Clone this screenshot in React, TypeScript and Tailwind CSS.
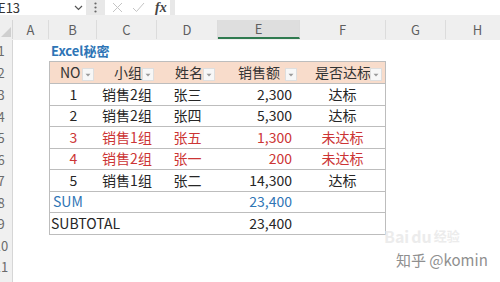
import React from 'react';

type Col = 'A' | 'B' | 'C' | 'D' | 'E' | 'F' | 'G' | 'H';

const colW: Record<Col, string> = {
    A: 'w-[36px]',
    B: 'w-[48px]',
    C: 'w-[60px]',
    D: 'w-[61px]',
    E: 'w-[82px]',
    F: 'w-[86px]',
    G: 'w-[60px]',
    H: 'w-[64px]',
};

const letters: Col[] = ['A', 'B', 'C', 'D', 'E', 'F', 'G', 'H'];

const rows = [
    { no: '1', group: '销售2组', name: '张三', amt: '2,300', ok: '达标', red: false },
    { no: '2', group: '销售2组', name: '张四', amt: '5,300', ok: '达标', red: false },
    { no: '3', group: '销售1组', name: '张五', amt: '1,300', ok: '未达标', red: true },
    { no: '4', group: '销售2组', name: '张一', amt: '200', ok: '未达标', red: true },
    { no: '5', group: '销售1组', name: '张二', amt: '14,300', ok: '达标', red: false },
];

const headers: { label: string; col: Col; pad: string }[] = [
    { label: 'NO', col: 'B', pad: 'pl-[10px]' },
    { label: '小组', col: 'C', pad: 'pl-[17px]' },
    { label: '姓名', col: 'D', pad: 'pl-[18px]' },
    { label: '销售额', col: 'E', pad: 'pl-[20px]' },
    { label: '是否达标', col: 'F', pad: 'pl-[15px]' },
];

const RowHead = ({ n }: { n: number }) => (
    <div className="flex w-[13px] shrink-0 items-center justify-end overflow-hidden border-r border-[#d6d6d6] bg-[#f0f0f0]">
        <div className="w-[22px] shrink-0 text-center text-[13px] text-[#6b6b6b]">{n}</div>
    </div>
);

const Dropdown = () => (
    <div className="absolute right-[3px] top-[6px] flex h-[13px] w-[12px] items-center justify-center border border-[#dedede] bg-[#f7f7f7]">
        <svg width="6" height="4" viewBox="0 0 6 4">
            <path d="M0.5 0.8 L5.5 0.8 L3 3.4 Z" fill="#9a9a9a" />
        </svg>
    </div>
);

const cellBase = 'flex shrink-0 items-center border-b border-[#bdbdbd] text-[14px]';

export default function App() {
    return (
        <div className="relative h-[282px] w-[500px] overflow-hidden bg-white font-['Noto_Sans_CJK_SC','Noto_Sans',sans-serif] text-[#262626]">
            {/* formula bar */}
            <div className="flex h-[15px] bg-[#e8e8e8]">
                <div className="flex w-[86px] items-center overflow-hidden bg-white">
                    <span className="-ml-[2px] text-[13px] leading-none text-[#333]">E13</span>
                    <svg className="ml-auto mr-[3px]" width="9" height="6" viewBox="0 0 9 6">
                        <path d="M1 1 L4.5 4.5 L8 1" stroke="#555" strokeWidth="1.2" fill="none" />
                    </svg>
                </div>
                <div className="flex w-[19px] items-center justify-center">
                    <svg width="3" height="11" viewBox="0 0 3 11">
                        <circle cx="1.5" cy="1.5" r="1.1" fill="#666" />
                        <circle cx="1.5" cy="5.5" r="1.1" fill="#666" />
                        <circle cx="1.5" cy="9.5" r="1.1" fill="#666" />
                    </svg>
                </div>
                <div className="flex w-[65px] items-center bg-white pl-[7px]">
                    <svg width="11" height="11" viewBox="0 0 11 11">
                        <path d="M1 1 L10 10 M10 1 L1 10" stroke="#c4c4c4" strokeWidth="1" />
                    </svg>
                    <svg className="ml-[9px]" width="13" height="11" viewBox="0 0 13 11">
                        <path d="M1 6 L4.5 9.5 L12 1" stroke="#c4c4c4" strokeWidth="1" fill="none" />
                    </svg>
                    <span className="ml-[10px] font-['Liberation_Serif',serif] text-[14px] font-bold italic leading-none text-[#444]">
                        fx
                    </span>
                </div>
                <div className="w-[5px]" />
                <div className="flex-1 bg-white" />
            </div>

            {/* column headers */}
            <div className="flex h-[25px] items-end bg-[#efefef] pb-[1px]">
                <div className="flex h-[19px] w-[13px] shrink-0 items-end justify-end border-r border-[#d6d6d6] pb-[2px] pr-[1px]">
                    <svg width="10" height="10" viewBox="0 0 10 10">
                        <path d="M10 0 L10 10 L0 10 Z" fill="#cfcfcf" />
                    </svg>
                </div>
                {letters.map((c) => (
                    <div
                        key={c}
                        className={`${colW[c]} flex h-[19px] shrink-0 items-center justify-center border-r border-[#dcdcdc] text-[13px] text-[#5f5f5f] ${
                            c === 'E' ? 'border-b-2 border-b-[#2f7a4f] bg-[#dedede]' : ''
                        }`}
                    >
                        {c}
                    </div>
                ))}
            </div>

            {/* row 1 */}
            <div className="flex h-[21px]">
                <RowHead n={1} />
                <div className={`${colW.A} shrink-0`} />
                <div className="flex items-center pl-[2px] text-[13px] font-bold text-[#2e75b6]">Excel秘密</div>
            </div>

            {/* row 2 table header */}
            <div className="flex h-[23px]">
                <RowHead n={2} />
                <div className={`${colW.A} shrink-0`} />
                {headers.map((h) => (
                    <div
                        key={h.col}
                        className={`${colW[h.col]} ${cellBase} relative border-t bg-[#f8dccb] ${h.pad} text-[#333] ${
                            h.col === 'B' ? 'border-l' : ''
                        } ${h.col === 'F' ? 'border-r' : ''}`}
                    >
                        {h.label}
                        <Dropdown />
                    </div>
                ))}
            </div>

            {/* data rows */}
            {rows.map((r, i) => (
                <div key={r.no} className={`flex h-[21.5px] ${r.red ? 'text-[#cc3535]' : ''}`}>
                    <RowHead n={i + 3} />
                    <div className={`${colW.A} shrink-0`} />
                    <div className={`${colW.B} ${cellBase} justify-center border-l`}>{r.no}</div>
                    <div className={`${colW.C} ${cellBase} justify-center`}>{r.group}</div>
                    <div className={`${colW.D} ${cellBase} justify-center`}>{r.name}</div>
                    <div className={`${colW.E} ${cellBase} justify-end pr-[8px]`}>{r.amt}</div>
                    <div className={`${colW.F} ${cellBase} justify-center border-r`}>{r.ok}</div>
                </div>
            ))}

            {/* SUM */}
            <div className="flex h-[21.5px]">
                <RowHead n={8} />
                <div className={`${colW.A} shrink-0`} />
                <div className={`w-[169px] ${cellBase} border-l pl-[3px] text-[#2f75b5]`}>SUM</div>
                <div className={`${colW.E} ${cellBase} justify-end pr-[8px] text-[#2f75b5]`}>23,400</div>
                <div className={`${colW.F} ${cellBase} border-r`} />
            </div>

            {/* SUBTOTAL */}
            <div className="flex h-[21.5px]">
                <RowHead n={9} />
                <div className={`${colW.A} shrink-0`} />
                <div className={`w-[169px] ${cellBase} border-l pl-[1px]`}>SUBTOTAL</div>
                <div className={`${colW.E} ${cellBase} justify-end pr-[8px]`}>23,400</div>
                <div className={`${colW.F} ${cellBase} border-r`} />
            </div>

            {[10, 11, 12].map((n) => (
                <div key={n} className="flex h-[21.5px]">
                    <RowHead n={n} />
                </div>
            ))}

            {/* watermarks */}
            <div className="absolute left-[384px] top-[226px] flex items-end text-[16px] font-bold leading-[20px] text-[#ececec]">
                <span>Bai</span>
                <span className="mx-[2px]">du</span>
                <span className="text-[13px]">经验</span>
            </div>
            <div className="absolute left-[396px] top-[251px] text-[15px] leading-[18px] text-[#8f8f8f]">知乎 @komin</div>
        </div>
    );
}
